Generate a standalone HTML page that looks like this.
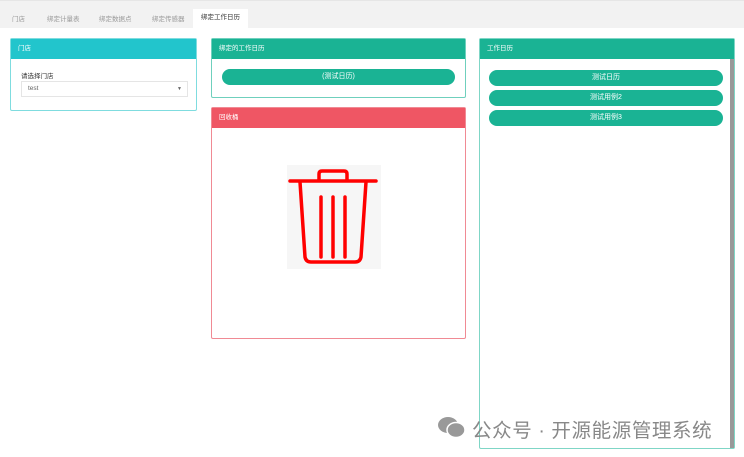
<!DOCTYPE html>
<html><head><meta charset="utf-8"><style>
*{box-sizing:border-box;margin:0;padding:0}
body{width:744px;height:457px;background:#fff;font-family:"Liberation Sans","Noto Sans CJK SC",sans-serif;font-size:7px;position:relative;overflow:hidden}
.tabs{position:absolute;left:0;top:0;width:744px;height:28px;background:#f2f2f2;border-top:1px solid #e6e6e6}
.tab{position:absolute;top:12px;color:#999;font-size:6.5px}
.act{position:absolute;left:193px;top:8px;width:55px;height:21px;background:#fff;color:#333;text-align:center;line-height:18px;font-size:6.5px}
.p{position:absolute;border:1px solid;border-radius:2px;background:#fff}
.h{height:20px;color:#fff;line-height:20px;padding-left:7px;font-size:6.5px}
.btn{position:absolute;height:16px;border-radius:8px;background:#1ab394;color:#fff;text-align:center;line-height:16px;font-size:7px}
</style></head><body>
<div class="tabs">
<span class="tab" style="left:12px">门店</span>
<span class="tab" style="left:47px">绑定计量表</span>
<span class="tab" style="left:99px">绑定数据点</span>
<span class="tab" style="left:152px">绑定传感器</span>
<div class="act">绑定工作日历</div>
</div>
<div class="p" style="left:10px;top:38px;width:187px;height:73px;border-color:#7fdcdf">
<div class="h" style="background:#22c5cc">门店</div>
<div style="position:absolute;left:10px;top:31px;font-size:6.5px;color:#333">请选择门店</div>
<div style="position:absolute;left:10px;top:42px;width:167px;height:16px;border:1px solid #e5e5e5;color:#666;font-size:6.5px;line-height:14px;padding-left:6px">test<span style="position:absolute;right:5px;top:0;font-size:5px">▼</span></div>
</div>
<div class="p" style="left:211px;top:38px;width:255px;height:60px;border-color:#6fd0bd">
<div class="h" style="background:#1ab394">绑定的工作日历</div>
<div class="btn" style="left:10px;top:30px;width:233px">(测试日历)</div>
</div>
<div class="p" style="left:211px;top:107px;width:255px;height:232px;border-color:#f08a94">
<div class="h" style="background:#ef5664">回收桶</div>
<svg style="position:absolute;left:75px;top:57px" width="94" height="104" viewBox="0 0 94 104">
<rect width="94" height="104" fill="#f6f6f6"/>
<g fill="none" stroke="#f00" stroke-width="3.5" stroke-linecap="round" stroke-linejoin="round">
<path d="M3 16H89"/><path d="M32 15V9q0-3 3-3h22q3 0 3 3v6"/>
<path d="M13 17l5 75q1 5 6 5h44q5 0 6-5l5-75"/>
<path d="M34 32v60M46 32v60M58 32v60"/>
</g></svg>
</div>
<div class="p" style="left:479px;top:38px;width:256px;height:411px;border-color:#7fd6c6">
<div class="h" style="background:#1ab394">工作日历</div>
<div style="position:absolute;right:0;top:20px;width:4px;height:389px;background:#999"></div>
<div class="btn" style="left:9px;top:31px;width:234px">测试日历</div>
<div class="btn" style="left:9px;top:51px;width:234px">测试用例2</div>
<div class="btn" style="left:9px;top:71px;width:234px">测试用例3</div>
</div>
<svg style="position:absolute;left:437px;top:416px" width="30" height="22" viewBox="0 0 30 22">
<ellipse cx="11" cy="9" rx="10" ry="8" fill="#999"/>
<ellipse cx="19" cy="14" rx="9" ry="7.5" fill="#999" stroke="#fff" stroke-width="1.5"/>
</svg>
<div style="position:absolute;left:472px;top:414px;color:#888;font-size:19.5px;white-space:nowrap;letter-spacing:0.6px">公众号 · 开源能源管理系统</div>
</body></html>
